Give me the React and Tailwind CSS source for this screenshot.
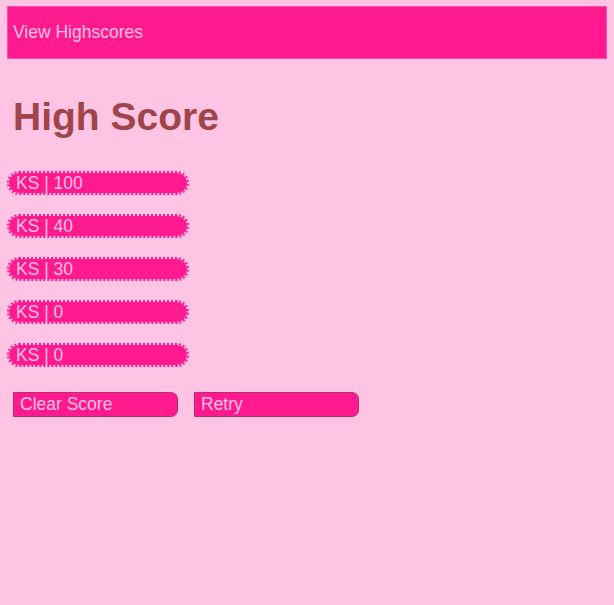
export default function App() {
  const scores = ["KS | 100", "KS | 40", "KS | 30", "KS | 0", "KS | 0"];
  return (
    <div className="min-h-[605px] w-full bg-[#ffc3e4] pt-[6px] px-[7px] font-['Liberation_Sans',Arial,sans-serif]">
      <div className="h-[53px] w-[600px] bg-[#ff1a8f] border border-[#ff4aa8] flex items-center pl-[5px] text-[17.5px] text-[#ffc0e3]">
        View Highscores
      </div>
      <h1 className="mt-[34px] ml-[6px] text-[39px] leading-[48px] font-bold text-[#a0444b]">High Score</h1>
      <div className="mt-[30px] flex flex-col gap-[19px]">
        {scores.map((s, i) => (
          <div
            key={i}
            className="w-[182px] h-[24px] rounded-[12px] border-2 border-dotted border-[#ff1a8f] bg-[#ff1a8f] bg-clip-padding flex items-center pl-[7px] text-[17.5px] text-[#ffc0e3]"
          >
            {s}
          </div>
        ))}
      </div>
      <div className="mt-[25px] ml-[6px] flex gap-[16px]">
        <button className="w-[165px] h-[25px] bg-[#ff1a8f] border border-[#b8306a] rounded-r-[7px] text-left pl-[6px] text-[17.5px] leading-none text-[#ffc0e3]">
          Clear Score
        </button>
        <button className="w-[165px] h-[25px] bg-[#ff1a8f] border border-[#b8306a] rounded-r-[7px] text-left pl-[6px] text-[17.5px] leading-none text-[#ffc0e3]">
          Retry
        </button>
      </div>
    </div>
  );
}
